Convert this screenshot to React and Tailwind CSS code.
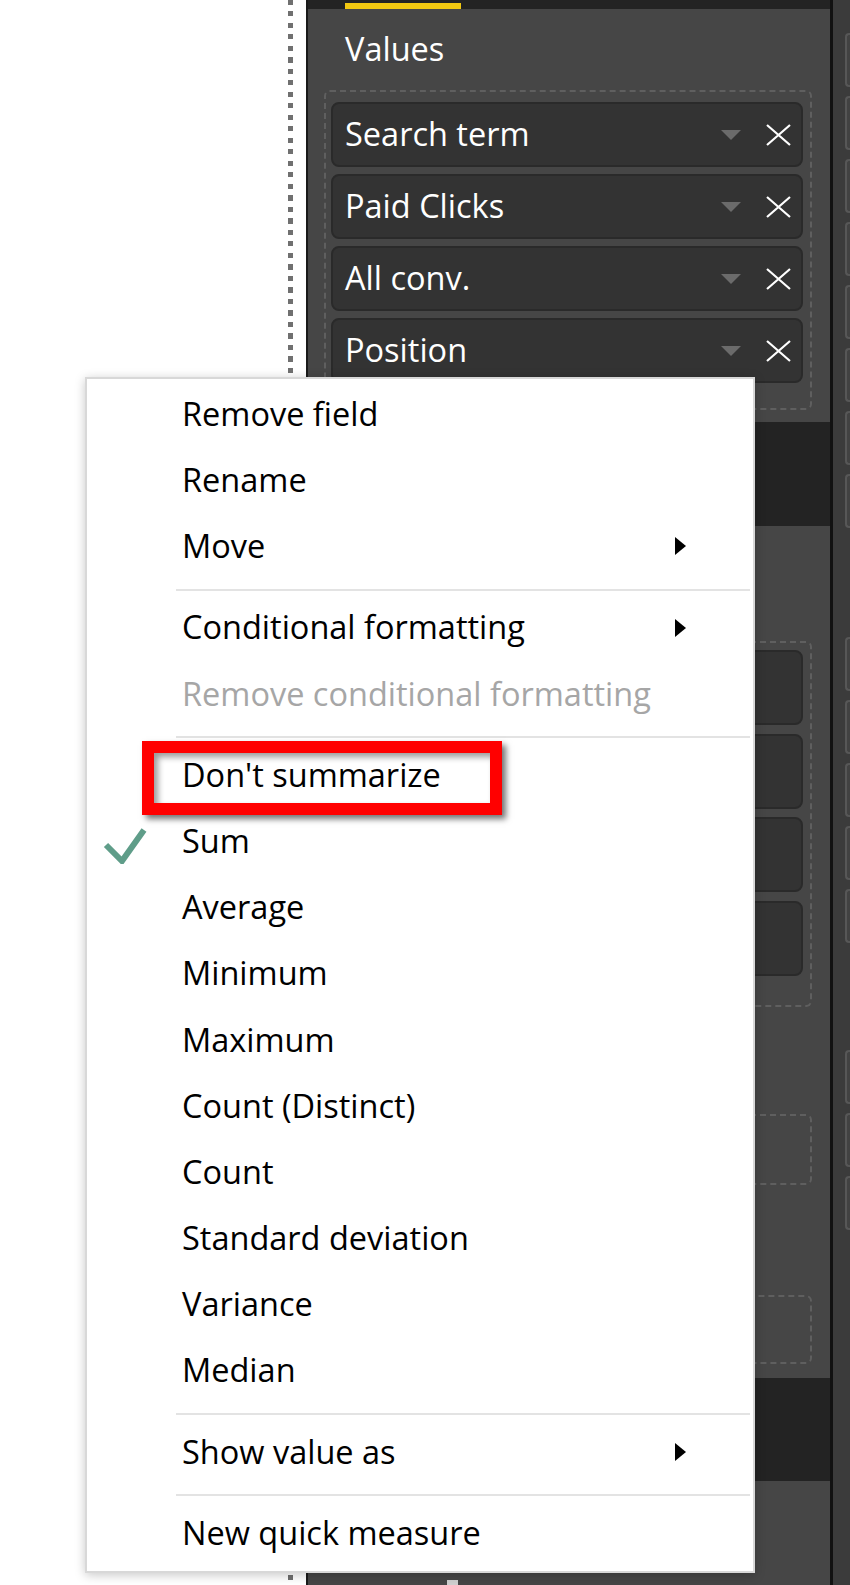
import React from 'react';

const valueFields = ['Search term', 'Paid Clicks', 'All conv.', 'Position'];

const menuItems = [
  { label: 'Remove field' },
  { label: 'Rename' },
  { label: 'Move', sub: true },
  { sep: true },
  { label: 'Conditional formatting', sub: true },
  { label: 'Remove conditional formatting', disabled: true },
  { sep: true },
  { label: "Don't summarize" },
  { label: 'Sum', checked: true },
  { label: 'Average' },
  { label: 'Minimum' },
  { label: 'Maximum' },
  { label: 'Count (Distinct)' },
  { label: 'Count' },
  { label: 'Standard deviation' },
  { label: 'Variance' },
  { label: 'Median' },
  { sep: true },
  { label: 'Show value as', sub: true },
  { sep: true },
  { label: 'New quick measure' },
];

const FieldChip = ({ name }) => (
  <div className="flex h-[65px] shrink-0 items-center rounded-[8px] border-2 border-[#2a2a2a] bg-[#333333] pl-[12px] pr-[9px]">
    <span className="flex-1 text-[32.5px] leading-none text-white">{name}</span>
    <svg width="20" height="10" viewBox="0 0 20 10">
      <polygon points="0,0 20,0 10,10" fill="#6b6b6b" />
    </svg>
    <svg className="ml-[24px]" width="27" height="22" viewBox="0 0 27 22">
      <path d="M2 1 L25 21 M25 1 L2 21" stroke="#ffffff" strokeWidth="2.2" fill="none" />
    </svg>
  </div>
);

const PlainChip = () => (
  <div className="h-[75px] shrink-0 rounded-[8px] border-2 border-[#2a2a2a] bg-[#333333]" />
);

const SideBox = () => (
  <div className="h-[54px] w-[10px] shrink-0 rounded-l-[4px] border-y-2 border-l-2 border-[#575757] bg-[#424242]" />
);

const Panel = () => (
  <div className="flex w-[522px] shrink-0 flex-col bg-[#464646]">
    <div className="h-[9px] bg-[#232323] pl-[37px] pt-[3px]">
      <div className="h-[6px] w-[116px] bg-[#f2c811]" />
    </div>
    <div className="mt-[20px] h-[40px] pl-[37px] text-[32.5px] leading-[40px] text-white">Values</div>

    <div className="ml-[16px] mt-[21px] flex h-[320px] w-[488px] flex-col gap-[7px] rounded-[6px] border-2 border-dashed border-[#5f5f5f] pl-[5px] pr-[7px] pt-[10px]">
      {valueFields.map(f => (
        <FieldChip key={f} name={f} />
      ))}
    </div>

    <div className="mt-[12px] h-[104px] bg-[#232323]" />

    <div className="ml-[16px] mt-[115px] flex h-[366px] w-[488px] flex-col gap-[8.5px] rounded-[6px] border-2 border-dashed border-[#5f5f5f] pl-[5px] pr-[7px] pt-[7px]">
      <PlainChip />
      <PlainChip />
      <PlainChip />
      <PlainChip />
    </div>

    <div className="ml-[16px] mt-[107px] h-[71px] w-[488px] rounded-[6px] border-2 border-dashed border-[#5f5f5f]" />
    <div className="ml-[16px] mt-[110px] h-[69px] w-[488px] rounded-[6px] border-2 border-dashed border-[#5f5f5f]" />

    <div className="mt-[14px] h-[103px] bg-[#232323]" />

    <div className="flex flex-1 items-end pl-[139px]">
      <div className="h-[5px] w-[11px] bg-[#cfcfcf]" />
    </div>
  </div>
);

const RightStrip = () => (
  <div className="flex w-[17px] shrink-0 flex-col bg-[#3b3b3b] pl-[12px]">
    <div className="mt-[33px] flex flex-col gap-[9px]">
      {[0, 1, 2, 3, 4, 5, 6, 7].map(i => <SideBox key={i} />)}
    </div>
    <div className="mt-[109px] flex flex-col gap-[9px]">
      {[0, 1, 2, 3, 4].map(i => <SideBox key={i} />)}
    </div>
    <div className="mt-[107px] flex flex-col gap-[9px]">
      {[0, 1, 2].map(i => <SideBox key={i} />)}
    </div>
  </div>
);

const ContextMenu = () => (
  <div className="absolute left-[85px] top-[377px] w-[670px] border-2 border-[#d8d8d8] bg-white pb-[5px] pt-[2px] shadow-[0_2px_10px_rgba(0,0,0,0.22)]">
    {menuItems.map((item, i) => {
      if (item.sep) {
        return <div key={i} className="mb-[4px] ml-[89px] mr-[3px] mt-[9px] h-[2px] bg-[#e3e3e3]" />;
      }
      return (
        <div key={i} className="flex h-[66.2px] items-center pl-[16px] pr-[67px]">
          <div className="flex w-[79px] shrink-0 items-center">
            {item.checked && (
              <svg width="44" height="44" viewBox="0 0 44 44" className="mt-[1px]">
                <path d="M3 25 L19 41 L41 10" stroke="#5f9d89" strokeWidth="6" fill="none" />
              </svg>
            )}
          </div>
          <span
            className={
              item.disabled
                ? 'flex-1 text-[32.5px] leading-none text-[#a6a6a6]'
                : 'flex-1 text-[32.5px] leading-none text-black'
            }
          >
            {item.label}
          </span>
          {item.sub && (
            <svg width="11" height="18" viewBox="0 0 11 18">
              <polygon points="0,0 11,9 0,18" fill="#000000" />
            </svg>
          )}
        </div>
      );
    })}
  </div>
);

const App = () => {
  return (
    <div className="relative flex h-[1585px] w-[850px] overflow-hidden bg-white font-['Open_Sans',sans-serif]">
      <div className="w-[288px] shrink-0 bg-white" />
      <div className="w-[5px] shrink-0 bg-[repeating-linear-gradient(to_bottom,#707070_0px,#707070_5px,transparent_5px,transparent_11.5px)]" />
      <div className="w-[13px] shrink-0 bg-white" />
      <div className="w-[2px] shrink-0 bg-[#1a1a1a]" />
      <Panel />
      <div className="w-[3px] shrink-0 bg-[#111111]" />
      <RightStrip />

      <ContextMenu />

      <div className="absolute left-[142px] top-[741px] h-[74px] w-[360px] border-[12px] border-[#ff0000] shadow-[4px_4px_6px_rgba(0,0,0,0.55),inset_4px_4px_6px_rgba(0,0,0,0.4)]" />
    </div>
  );
};

export default App;
